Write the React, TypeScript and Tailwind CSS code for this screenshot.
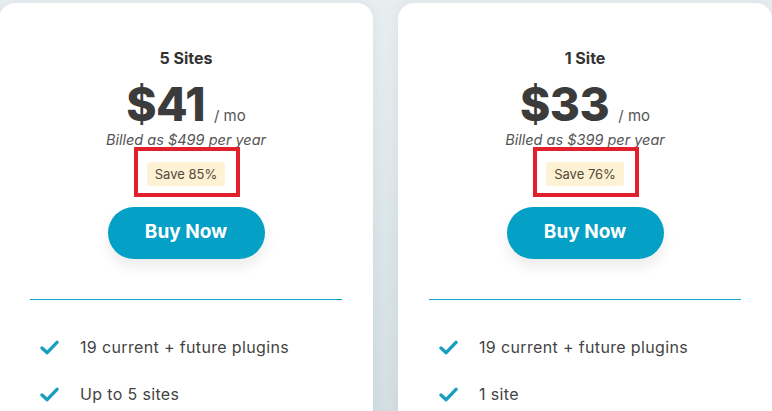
import { useState } from "react";

const plans = [
  {
    name: "5 Sites",
    price: "41",
    billed: "Billed as $499 per year",
    save: "Save 85%",
    features: ["19 current + future plugins", "Up to 5 sites"],
  },
  {
    name: "1 Site",
    price: "33",
    billed: "Billed as $399 per year",
    save: "Save 76%",
    features: ["19 current + future plugins", "1 site"],
  },
];

function Check() {
  return (
    <svg viewBox="0 0 20 16" className="w-[19px] h-[15px] shrink-0" fill="none">
      <path
        d="M2 8.5 L7.5 13.5 L18 2.5"
        stroke="#1a9ec0"
        strokeWidth="3.6"
        strokeLinecap="round"
        strokeLinejoin="round"
      />
    </svg>
  );
}

function PlanCard({ plan }: { plan: (typeof plans)[number] }) {
  const [hover, setHover] = useState(false);
  return (
    <div className="w-[374px] shrink-0 h-[480px] bg-white rounded-[16px] shadow-[0_0_12px_rgba(120,150,160,0.12)] px-[31px] pt-[45px] flex flex-col items-center">
      {/* Title */}
      <h3 className="text-[16px] leading-[20px] font-bold text-[#333]">{plan.name}</h3>

      {/* Price */}
      <div className="mt-[13px] flex items-baseline">
        <span className="text-[46px] leading-[46px] font-extrabold text-[#3b3b3b] tracking-[-0.5px]">
          ${plan.price}
        </span>
        <span className="ml-[9px] text-[15px] text-[#555]">/ mo</span>
      </div>
      <p className="mt-[3px] text-[14.5px] leading-[18px] italic text-[#555]">{plan.billed}</p>

      {/* Savings badge, marked with a red frame */}
      <div className="relative mt-[13px]">
        <span className="block bg-[#fdf2d3] rounded-[3px] px-[8px] h-[24px] leading-[24px] text-[13px] text-[#54493a]">
          {plan.save}
        </span>
        <span className="absolute -top-[15px] -left-[13px] -right-[15px] -bottom-[11px] border-[4px] border-[#e2202b] pointer-events-none" />
      </div>

      {/* CTA */}
      <button
        onMouseEnter={() => setHover(true)}
        onMouseLeave={() => setHover(false)}
        className={`mt-[21px] w-[157px] h-[52px] rounded-full text-white text-[19px] font-bold shadow-[0_8px_14px_rgba(0,0,0,0.08)] ${
          hover ? "bg-[#0391b3]" : "bg-[#04a0c5]"
        }`}
      >
        Buy Now
      </button>

      <div className="mt-[40px] w-full h-px bg-[#0fa3bf]" />

      {/* Features */}
      <ul className="mt-[37px] w-full flex flex-col gap-[26px] pl-[10px]">
        {plan.features.map((f) => (
          <li key={f} className="flex items-center gap-[21px] h-[21px]">
            <Check />
            <span className="text-[16px] tracking-[0.35px] text-[#444]">{f}</span>
          </li>
        ))}
      </ul>
    </div>
  );
}

export default function App() {
  return (
    <div
      className="h-[411px] overflow-hidden bg-gradient-to-b from-[#e8eef0] to-[#d3dee3] pt-[3px] flex"
      style={{ fontFamily: "Inter, 'Noto Sans', sans-serif" }}
    >
      <div className="-ml-px flex gap-[25px]">
        {plans.map((p) => (
          <PlanCard key={p.name} plan={p} />
        ))}
      </div>
    </div>
  );
}
